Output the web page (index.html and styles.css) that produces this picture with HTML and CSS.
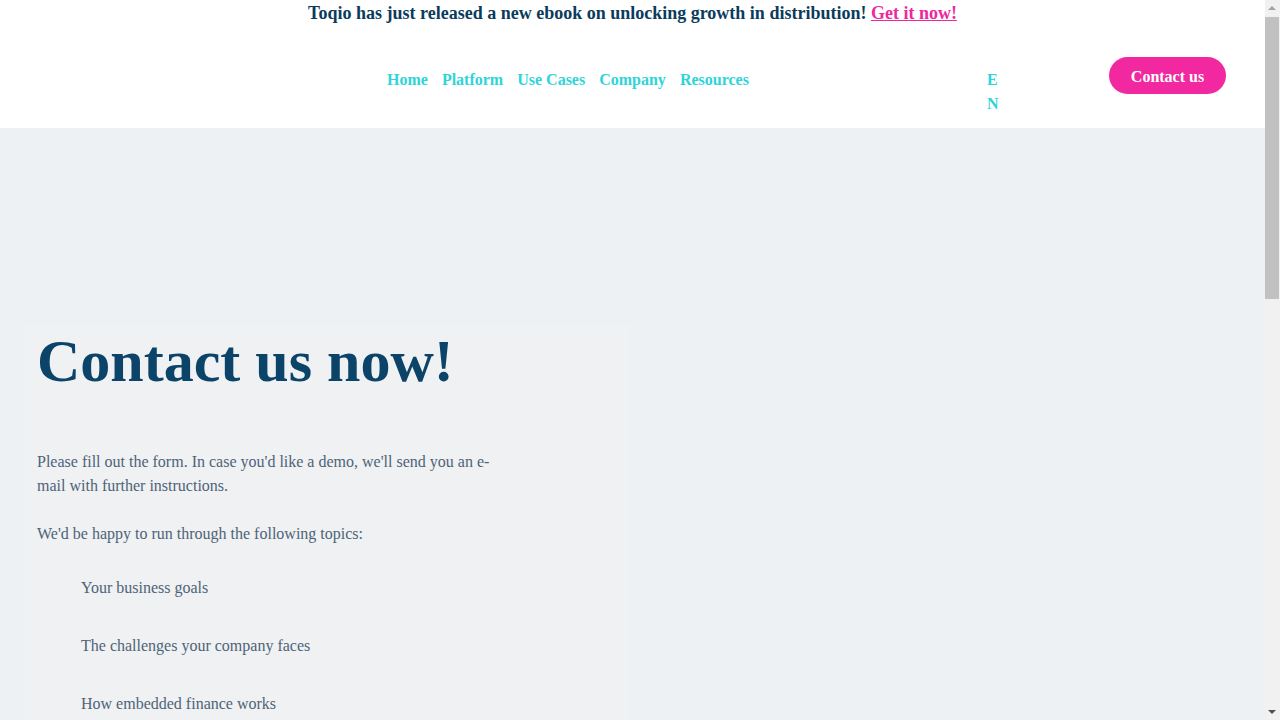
FILE: index.html
```html
<!DOCTYPE html>
<html lang="en">
<head>
<meta charset="utf-8">
<title>Contact us - Toqio</title>
<link rel="stylesheet" href="styles.css">
</head>
<body>
<div class="page">
  <div class="banner">Toqio has just released a new ebook on unlocking growth in distribution! <a href="#" class="banner-link">Get it now!</a></div>
  <header class="header">
    <nav class="nav">
      <a href="#" class="nav-link">Home</a>
      <a href="#" class="nav-link">Platform</a>
      <a href="#" class="nav-link">Use Cases</a>
      <a href="#" class="nav-link">Company</a>
      <a href="#" class="nav-link">Resources</a>
    </nav>
    <div class="lang">EN</div>
    <a href="#" class="cta">Contact us</a>
  </header>
  <main class="main">
    <section class="card">
      <h1 class="title">Contact us now!</h1>
      <p class="text intro">Please fill out the form. In case you'd like a demo, we'll send you an e-mail with further instructions.</p>
      <p class="text">We'd be happy to run through the following topics:</p>
      <ul class="topics">
        <li class="topic">Your business goals</li>
        <li class="topic">The challenges your company faces</li>
        <li class="topic">How embedded finance works</li>
        <li class="topic">How Toqio can help you grow</li>
      </ul>
    </section>
  </main>
</div>
<div class="scrollbar" aria-hidden="true">
  <div class="sb-arrow sb-up"></div>
  <div class="sb-thumb"></div>
  <div class="sb-arrow sb-down"></div>
</div>
</body>
</html>
```

FILE: styles.css
```css
html, body {
  margin: 0;
  padding: 0;
}
body {
  font-family: "Liberation Serif", "Times New Roman", serif;
  background: #edf1f3;
  color: #4e6377;
  overflow-x: hidden;
}
.page {
  margin-right: 15px;
}
.banner {
  background: #ffffff;
  height: 28px;
  line-height: 26px;
  text-align: center;
  font-size: 18px;
  font-weight: bold;
  color: #0b3b5c;
}
.banner-link {
  color: #f0269c;
}
.header {
  background: #ffffff;
  height: 100px;
  display: flex;
  align-items: flex-start;
  padding: 0 39px 0 387px;
}
.nav {
  display: flex;
  gap: 14px;
  margin-top: 40px;
}
.nav-link {
  color: #2fd4d8;
  font-size: 16px;
  font-weight: bold;
  line-height: 24px;
  text-decoration: none;
}
.lang {
  width: 12px;
  margin-top: 40px;
  margin-left: 238px;
  color: #2fd4d8;
  font-size: 16px;
  font-weight: bold;
  line-height: 24px;
  word-break: break-all;
}
.cta {
  margin-left: auto;
  margin-top: 29px;
  width: 117px;
  height: 37px;
  box-sizing: border-box;
  padding-top: 2px;
  border-radius: 19px;
  background: #f228a0;
  color: #ffffff;
  font-size: 16px;
  font-weight: bold;
  display: flex;
  align-items: center;
  justify-content: center;
  text-decoration: none;
}
.main {
  padding: 197px 0 200px 23px;
}
.card {
  width: 607px;
  box-sizing: border-box;
  background: #eff1f3;
  padding: 1px 14px 40px;
}
.title {
  margin: 0;
  font-size: 60px;
  line-height: 70px;
  color: #0b4369;
  font-weight: bold;
}
.text {
  max-width: 460px;
  font-size: 16px;
  line-height: 24px;
  margin: 0 0 24px;
}
.intro {
  margin-top: 54px;
}
.topics {
  list-style: none;
  margin: 30px 0 0;
  padding: 0 0 0 44px;
}
.topic {
  font-size: 16px;
  line-height: 24px;
  margin-bottom: 34px;
}
.scrollbar {
  position: fixed;
  top: 0;
  right: 0;
  width: 15px;
  height: 100vh;
  background: #f1f1f1;
}
.sb-thumb {
  position: absolute;
  top: 17px;
  left: 0;
  width: 14px;
  height: 282px;
  background: #c1c1c1;
}
.sb-arrow {
  position: absolute;
  left: 3px;
  width: 0;
  height: 0;
  border-left: 4px solid transparent;
  border-right: 4px solid transparent;
}
.sb-up {
  top: 6px;
  border-bottom: 4px solid #a3a3a3;
}
.sb-down {
  bottom: 6px;
  border-top: 4px solid #505050;
}
```
